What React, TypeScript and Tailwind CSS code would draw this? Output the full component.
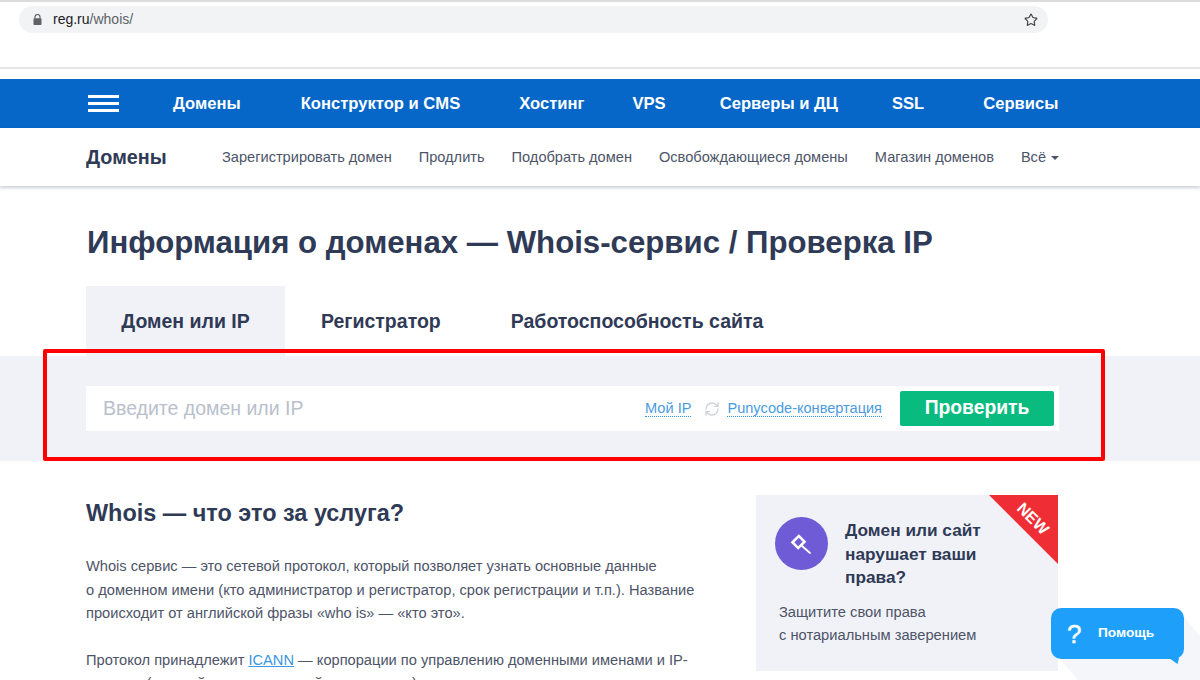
import { Star, RefreshCw } from "lucide-react";

const mainLinks = [
  { label: "Домены", gap: "" },
  { label: "Конструктор и CMS", gap: "ml-[60px]" },
  { label: "Хостинг", gap: "ml-[59px]" },
  { label: "VPS", gap: "ml-[48px]" },
  { label: "Серверы и ДЦ", gap: "ml-[54px]" },
  { label: "SSL", gap: "ml-[54px]" },
  { label: "Сервисы", gap: "ml-[59px]" },
];
const subLinks = ["Зарегистрировать домен", "Продлить", "Подобрать домен", "Освобождающиеся домены", "Магазин доменов"];

export default function App() {
  return (
    <div className="relative h-[680px] w-[1200px] overflow-hidden bg-white font-['Liberation_Sans',Arial,sans-serif] text-[#2f3a56]">
      {/* Browser bar */}
      <div className="h-[69px] border-b-2 border-[#e6e6e6]">
        <div className="h-[2px] bg-[#dcdcdc]" />
        <div className="ml-[19px] mt-[4px] flex h-[27px] w-[1029px] items-center rounded-full bg-[#f1f3f4] pl-[14px] pr-[10px]">
          <svg width="9" height="11" viewBox="0 0 9 11" className="text-[#5f6368]">
            <path d="M2 4.5V3a2.5 2.5 0 0 1 5 0v1.5" fill="none" stroke="currentColor" strokeWidth="1.2" />
            <rect x="0.5" y="4.2" width="8" height="6.8" rx="0.8" fill="currentColor" />
          </svg>
          <span className="ml-[11px] text-[14px] text-[#202124]">reg.ru<span className="text-[#5f6368]">/whois/</span></span>
          <Star size={14} className="ml-auto text-[#444]" />
        </div>
      </div>

      {/* Main nav */}
      <div className="mt-[10px] flex h-[49px] items-center bg-[#0667c8] pl-[88px] text-white">
        <div className="flex w-[31px] flex-col gap-[3.5px]">
          <div className="h-[3.5px] bg-white" />
          <div className="h-[3.5px] bg-white" />
          <div className="h-[3.5px] bg-white" />
        </div>
        <div className="ml-[54px] flex pt-[1px] text-[16.6px] font-bold">
          {mainLinks.map((l) => (
            <span key={l.label} className={l.gap}>{l.label}</span>
          ))}
        </div>
      </div>

      {/* Sub nav */}
      <div className="flex h-[58px] items-center pl-[86px] pt-[1px] shadow-[0_2px_3px_rgba(60,70,100,0.25)]">
        <span className="w-[136px] text-[19.8px] font-bold">Домены</span>
        <div className="flex gap-[27px] text-[14.6px] text-[#4d5468]">
          {subLinks.map((l) => (
            <span key={l}>{l}</span>
          ))}
          <span className="flex items-center gap-[5px]">
            Всё
            <span className="mt-[2px] border-x-[4px] border-t-[4px] border-x-transparent border-t-[#4d5468]" />
          </span>
        </div>
      </div>

      <h1 className="ml-[87px] mt-[37px] text-[31.2px] font-bold leading-[40px]">Информация о доменах — Whois-сервис / Проверка IP</h1>

      {/* Tabs */}
      <div className="ml-[86px] mt-[23px] flex h-[70px] items-center text-[19.5px] font-bold">
        <div className="flex h-full w-[199px] items-center justify-center bg-[#f1f2f7] pt-[2px]">Домен или IP</div>
        <div className="ml-[36px] pt-[2px]">Регистратор</div>
        <div className="ml-[70px] pt-[2px]">Работоспособность сайта</div>
      </div>

      {/* Search band */}
      <div className="flex h-[105px] items-center bg-[#f1f2f7] pl-[86px]">
        <div className="flex h-[45px] w-[973px] items-center bg-white pl-[17px] pr-[5px]">
          <span className="text-[19.5px] text-[#b9bfcd]">Введите домен или IP</span>
          <span className="ml-auto border-b border-dotted border-[#2f8fe0] text-[14.6px] leading-[15px] text-[#4a9be0]">Мой IP</span>
          <RefreshCw size={16} className="ml-[13px] text-[#cfd2d6]" />
          <span className="ml-[7px] border-b border-dotted border-[#2f8fe0] text-[14.55px] leading-[15px] text-[#4a9be0]">Punycode-конвертация</span>
          <div className="ml-[18px] flex h-[35px] w-[154px] items-center justify-center rounded-[2px] bg-[#0abb7f] text-[19.3px] font-bold text-white">Проверить</div>
        </div>
      </div>

      {/* Content */}
      <div className="flex pl-[86px] pt-[34px]">
        <div className="w-[620px]">
          <h2 className="text-[23.45px] font-bold leading-[36px]">Whois — что это за услуга?</h2>
          <p className="mt-[24px] text-[14.65px] leading-[23.5px] text-[#4d5468]">
            Whois сервис — это сетевой протокол, который позволяет узнать основные данные
            <br />о доменном имени (кто администратор и регистратор, срок регистрации и т.п.). Название
            <br />происходит от английской фразы «who is» — «кто это».
          </p>
          <p className="mt-[23px] text-[14.65px] leading-[23.5px] text-[#4d5468]">
            Протокол принадлежит <span className="text-[#3a96e0] underline">ICANN</span> — корпорации по управлению доменными именами и IP-
            <br />адресов (частной некоммерческой организации)
          </p>
        </div>

        <div className="relative ml-[50px] h-[176px] w-[302px] bg-[#f1f2f7]">
          <svg className="absolute right-0 top-0" width="69" height="69" viewBox="0 0 69 69">
            <polygon points="0,0 69,0 69,69" fill="#ee2e34" />
          </svg>
          <span className="absolute right-[7px] top-[16px] rotate-45 text-[16px] font-bold leading-none text-white">NEW</span>
          <div className="flex pl-[19px] pt-[22px]">
            <div className="flex h-[53px] w-[53px] items-center justify-center rounded-full bg-[#6f5bd6]">
              <svg width="26" height="26" viewBox="0 0 26 26" fill="none" stroke="white">
                <rect x="5" y="7" width="9" height="8" transform="rotate(-45 9.5 11)" strokeWidth="2.6" />
                <path d="M12.5 14.5l8.5 7.5" strokeWidth="1.8" strokeLinecap="round" />
              </svg>
            </div>
            <div className="ml-[17px] pt-[2px] text-[17.25px] font-bold leading-[23.5px]">
              Домен или сайт
              <br />нарушает ваши
              <br />права?
            </div>
          </div>
          <p className="ml-[23px] mt-[11px] text-[14.7px] leading-[23.5px] text-[#4d5468]">
            Защитите свои права
            <br />с нотариальным заверением
          </p>
        </div>
      </div>

      {/* Help button with its long shadow */}
      <svg className="absolute left-[1040px] top-[600px]" width="160" height="80" viewBox="0 0 160 80">
        <polygon points="16,55 38,80 160,80 160,36 140,12" fill="#f5f6f9" />
      </svg>
      <div className="absolute left-[1051px] top-[608px] flex h-[51px] w-[133px] items-center rounded-[10px] bg-[#1e9ffa] pl-[16px] text-white">
        <span className="w-[16px] text-[26px] leading-none [-webkit-text-stroke:0.5px_white]">?</span>
        <span className="ml-[15px] text-[13.7px] font-bold">Помощь</span>
        <svg className="absolute bottom-[-5px] right-[5px]" width="10" height="6" viewBox="0 0 10 6">
          <polygon points="0,0 10,0 8.5,6" fill="#1e9ffa" />
        </svg>
      </div>

      {/* Red highlight */}
      <div className="absolute left-[43px] top-[349px] h-[112px] w-[1062px] rounded-[2px] border-[4px] border-[#ff0000]" />
    </div>
  );
}
